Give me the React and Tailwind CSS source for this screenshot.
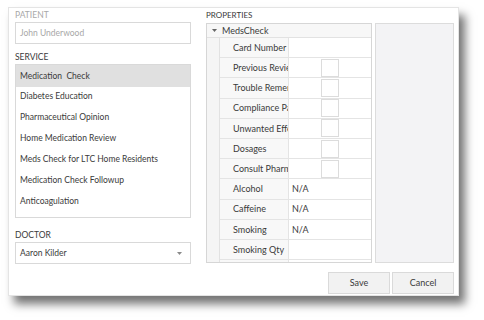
import React from 'react';

const services = [
  'Medication  Check',
  'Diabetes Education',
  'Pharmaceutical Opinion',
  'Home Medication Review',
  'Meds Check for LTC Home Residents',
  'Medication Check Followup',
  'Anticoagulation',
];

const props = [
  { name: 'Card Number' },
  { name: 'Previous Review', check: true },
  { name: 'Trouble Remembering', check: true },
  { name: 'Compliance Packaging', check: true },
  { name: 'Unwanted Effects', check: true },
  { name: 'Dosages', check: true },
  { name: 'Consult Pharmacist', check: true },
  { name: 'Alcohol', value: 'N/A' },
  { name: 'Caffeine', value: 'N/A' },
  { name: 'Smoking', value: 'N/A' },
  { name: 'Smoking Qty' },
  { name: 'Smoking Type' },
];

const App = () => {
  return (
    <div className="w-[484px] h-[320px] bg-white overflow-hidden pt-[7px] pl-[8px] text-[#3a3a3a]" style={{ fontFamily: 'Lato, "Liberation Sans", sans-serif' }}>
      <div className="w-[451px] h-[289px] bg-white border border-[#e4e4e4] shadow-[6px_8px_9px_rgba(0,0,0,0.55)] flex">
        {/* left column */}
        <div className="w-[176px] ml-[6px] flex flex-col">
          <div className="mt-[1px] h-[13px] leading-[13px] text-[8.5px] text-[#a8a8a8]">PATIENT</div>
          <div className="h-[22px] border border-[#d9d9d9] flex items-center pl-[4px] text-[8.5px] text-[#a8a8a8]">John Underwood</div>

          <div className="mt-[7px] h-[13px] leading-[13px] text-[8.5px]">SERVICE</div>
          <div className="h-[154px] border border-[#d9d9d9]">
            {services.map((s, i) => (
              <div
                key={i}
                className={
                  i === 0
                    ? 'h-[22px] mb-[-1px] flex items-center pl-[4px] text-[8.5px] bg-[#e0e0e0] whitespace-pre'
                    : 'h-[21px] flex items-center pl-[4px] text-[8.5px] whitespace-pre'
                }
              >
                {s}
              </div>
            ))}
          </div>

          <div className="mt-[10px] h-[14px] leading-[14px] text-[8.5px]">DOCTOR</div>
          <div className="h-[22px] border border-[#d9d9d9] flex items-center justify-between pl-[4px] pr-[8px] text-[8.5px]">
            <span>Aaron Kilder</span>
            <svg width="5" height="3" viewBox="0 0 5 3"><path d="M0 0h5L2.5 3z" fill="#8a8a8a" /></svg>
          </div>
        </div>

        {/* right column */}
        <div className="ml-[15px] flex flex-col">
          <div className="mt-[1px] h-[13px] leading-[13px] text-[8px]">PROPERTIES</div>
          <div className="mt-[1px] flex gap-[3px]">
            <div className="w-[166px] h-[240px] border border-[#d6d6d6] overflow-hidden">
              <div className="h-[14px] flex items-center bg-[#f7f7f7] border-b border-[#e2e2e2]">
                <svg className="ml-[5px]" width="5" height="3" viewBox="0 0 5 3"><path d="M0 0h5L2.5 3z" fill="#666" /></svg>
                <span className="ml-[5px] text-[9px]">MedsCheck</span>
              </div>
              <div className="flex">
                <div className="w-[13px] bg-[#f5f5f5] border-r border-[#e2e2e2]" />
                <div className="flex-1">
                  {props.map((p, i) => (
                    <div key={i} className="h-[20.2px] flex border-b border-[#e4e4e4]">
                      <div className="w-[69px] bg-[#f8f8f8] border-r border-[#e4e4e4] pl-[13px] flex items-center overflow-hidden whitespace-nowrap text-[9px]">
                        {p.name}
                      </div>
                      <div className="flex-1 flex items-center text-[9px]">
                        {p.check && <div className="ml-[32px] w-[18px] h-[18px] border border-[#dcdcdc] bg-white" />}
                        {p.value && <span className="ml-[3px]">{p.value}</span>}
                      </div>
                    </div>
                  ))}
                </div>
              </div>
            </div>
            <div className="w-[79px] h-[240px] border border-[#dcdcdc] bg-[#f3f3f5]" />
          </div>

          <div className="mt-[9px] flex justify-end gap-[2px]">
            <button className="w-[62px] h-[22px] border border-[#dadada] bg-[#f2f2f2] text-[9px] text-[#3a3a3a]">Save</button>
            <button className="w-[62px] h-[22px] border border-[#dadada] bg-[#f2f2f2] text-[9px] text-[#3a3a3a]">Cancel</button>
          </div>
        </div>
      </div>
    </div>
  );
};

export default App;
